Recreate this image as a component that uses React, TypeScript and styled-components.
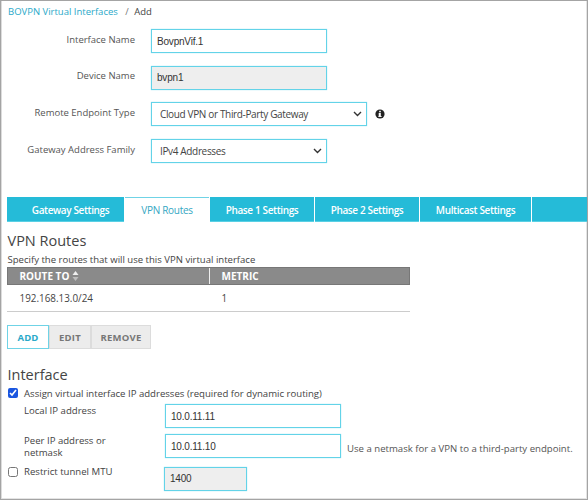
import React from "react";
import styled, { createGlobalStyle } from "styled-components";

const Global = createGlobalStyle`
  html, body { margin: 0; padding: 0; background: #fff; }
  body { font-family: "Open Sans", "Liberation Sans", sans-serif; font-size: 9.6px; color: #444; }
`;

const Frame = styled.div`
  width: 588px; height: 500px; box-sizing: border-box; overflow: hidden;
  border: 1px solid #a4a4a4;
  box-shadow: inset 1px 0 0 #dcdcdc, inset -1px 0 0 #e4e4e4, inset 0 -1px 0 #e4e4e4;
  display: flex; flex-direction: column;
`;
const Crumbs = styled.div`
  padding: 4px 0 0 7px; height: 23px; box-sizing: border-box; line-height: 14px; font-size: 9.5px;
  a { color: #2aa9c9; text-decoration: none; }
  span { margin: 0 5.5px 0 7.5px; color: #777; }
`;
const FormRows = styled.div`
  display: flex; flex-direction: column; gap: 12.7px; padding-top: 5px;
`;
const Row = styled.div`
  display: grid; grid-template-columns: 134px auto auto; justify-content: start; column-gap: 16px; align-items: start;
`;
const RowLabel = styled.label`
  text-align: right; line-height: 14px; padding-top: 3.5px; font-size: 9.5px; color: #555; white-space: nowrap;
`;
const Field = styled.div<{ $w: number; $bg?: string; $pl?: number }>`
  width: ${p => p.$w}px; height: 24px; box-sizing: border-box;
  border: 1px solid #63d3e8;
  box-shadow: 0 0 1px rgba(99, 211, 232, 0.7);
  background: ${p => p.$bg || "#fff"};
  padding-left: ${p => p.$pl ?? 5}px;
  display: flex; align-items: center; justify-content: space-between;
  font-family: "Liberation Sans", Arial, sans-serif; font-size: 10px; letter-spacing: -0.2px; color: #333;
  svg { margin-right: 4px; }
`;
const SelectField = styled(Field)`
  font-family: "Open Sans", sans-serif; font-size: 10px; letter-spacing: -0.35px; color: #444;
`;
const InfoWrap = styled.div`
  display: flex; align-items: center; height: 23px; margin-left: -8.5px;
`;
const Tabs = styled.div`
  display: flex; margin: 34px 0 0 6px; height: 25px; gap: 1px; flex-shrink: 0;
`;
const Tab = styled.div<{ $active?: boolean; $w?: number; $grow?: boolean; $pl?: number }>`
  ${p => p.$w ? `width: ${p.$w}px;` : ""}
  ${p => p.$grow ? "flex: 1;" : ""}
  box-sizing: border-box;
  padding-left: ${p => p.$pl ?? 0}px;
  background: ${p => p.$active ? "#fff" : "#25bbd8"};
  border-top: 1px solid ${p => p.$active ? "#6fd3e6" : "#25bbd8"};
  color: ${p => p.$active ? "#35a7c3" : "#fff"};
  font-size: 10px; letter-spacing: ${p => p.$active ? -0.3 : -0.37}px; font-weight: ${p => p.$active ? 400 : 600};
  display: flex; align-items: center; justify-content: center;
  box-shadow: ${p => p.$active ? "none" : "inset 0 -1px 0 #5ad0e4"};
`;
const Heading = styled.h2`
  margin: 0; font-weight: 400; font-size: 14.5px; line-height: 20px; color: #444; padding-left: 6.5px;
`;
const RoutesHeading = styled(Heading)`
  margin-top: 9px;
`;
const Hint = styled.div`
  padding-left: 6.5px; line-height: 14px; font-size: 9.55px; color: #444; margin-top: 2px;
`;
const Table = styled.div`
  width: 403px; margin-left: 6px;
`;
const THead = styled.div`
  display: grid; grid-template-columns: 201px 1fr; height: 18px; background: #8a8a8a;
  box-sizing: border-box; border: 1px solid #777;
`;
const Th = styled.div`
  color: #fff; font-weight: 700; font-size: 10px; padding-left: 11.5px; display: flex; align-items: center; gap: 3px;
  & + & { border-left: 1px solid #eee; }
`;
const TRow = styled.div`
  display: grid; grid-template-columns: 202px 1fr; height: 27px; box-sizing: border-box; align-items: center; border-bottom: 1px solid #ccc;
  font-size: 9.9px; color: #444;
  div { padding-left: 12.5px; }
`;
const Buttons = styled.div`
  display: flex; margin: 13px 0 0 6px; height: 24px;
`;
const Btn = styled.button<{ $primary?: boolean; $w: number }>`
  width: ${p => p.$w}px; box-sizing: border-box; padding: 0; margin: 0;
  border: 1px solid ${p => p.$primary ? "#6fd3e6" : "#dcdcdc"};
  background: ${p => p.$primary ? "#fff" : "#ececec"};
  color: ${p => p.$primary ? "#2aa9c9" : "#777"};
  font: 700 9.5px "Open Sans", sans-serif; letter-spacing: 0.2px;
`;
const InterfaceHeading = styled(Heading)`
  margin-top: 16px;
`;
const CheckRow = styled.div`
  display: flex; align-items: center; gap: 6px; padding-left: 7px; height: 14px; font-size: 9.6px; color: #444; margin-top: 1px;
`;
const Check = styled.input`
  width: 10px; height: 10px; margin: 0; flex-shrink: 0; accent-color: #1a56e0;
`;
const SubRows = styled.div`
  display: flex; flex-direction: column; gap: 6px; margin-top: 4px;
`;
const SubRow = styled.div`
  display: grid; grid-template-columns: 141px 176px auto; padding-left: 23px;
`;
const SubLabel = styled.div`
  line-height: 12.7px; font-size: 9.6px; color: #444; width: 90px; padding-top: 0.5px;
`;
const Note = styled.div`
  font-size: 9.6px; color: #555; padding: 8px 0 0 6px; white-space: nowrap; line-height: 14px;
`;
const MtuRow = styled.div`
  display: grid; grid-template-columns: 16px 140px auto; align-items: start; padding-left: 7px; margin-top: 7px;
`;
const MtuCheck = styled.div`
  line-height: 12px; height: 12px; margin-top: -1px; display: flex; align-items: center;
`;
const MtuLabel = styled.div`
  font-size: 9.6px; color: #444; line-height: 12px; margin-top: -1px;
`;

const Chevron = () => (
  <svg width="9" height="6" viewBox="0 0 9 6"><path d="M1 1l3.5 3.5L8 1" fill="none" stroke="#333" strokeWidth="1.4" /></svg>
);
const Info = () => (
  <svg width="10" height="10" viewBox="0 0 10 10">
    <circle cx="5" cy="5" r="4.6" fill="#222" />
    <rect x="4.2" y="1.8" width="1.6" height="1.5" fill="#fff" />
    <rect x="3.7" y="4" width="2.1" height="3.6" fill="#fff" />
    <rect x="3.4" y="7" width="3.2" height="0.9" fill="#fff" />
  </svg>
);
const Sort = () => (
  <svg width="7" height="10" viewBox="0 0 7 10"><path d="M3.5 0l3 4H.5z" fill="#f0f0f0" /><path d="M3.5 10l-3-4h6z" fill="#bdbdbd" /></svg>
);

export default function App() {
  return (
    <Frame>
      <Global />
      <Crumbs><a href="#x">BOVPN Virtual Interfaces</a><span>/</span>Add</Crumbs>
      <FormRows>
        <Row><RowLabel>Interface Name</RowLabel><Field $w={176}>BovpnVif.1</Field></Row>
        <Row><RowLabel>Device Name</RowLabel><Field $w={176} $bg="#eee">bvpn1</Field></Row>
        <Row>
          <RowLabel>Remote Endpoint Type</RowLabel>
          <SelectField $w={216} $pl={8}>Cloud VPN or Third-Party Gateway<Chevron /></SelectField>
          <InfoWrap><Info /></InfoWrap>
        </Row>
        <Row><RowLabel>Gateway Address Family</RowLabel><SelectField $w={176} $pl={8}>IPv4 Addresses<Chevron /></SelectField></Row>
      </FormRows>
      <Tabs>
        <Tab $w={117} $pl={10}>Gateway Settings</Tab>
        <Tab $active $w={84}>VPN Routes</Tab>
        <Tab $w={104}>Phase 1 Settings</Tab>
        <Tab $w={104}>Phase 2 Settings</Tab>
        <Tab $w={111}>Multicast Settings</Tab>
        <Tab $grow />
      </Tabs>
      <RoutesHeading>VPN Routes</RoutesHeading>
      <Hint>Specify the routes that will use this VPN virtual interface</Hint>
      <Table>
        <THead><Th>ROUTE TO <Sort /></Th><Th>METRIC</Th></THead>
        <TRow><div>192.168.13.0/24</div><div>1</div></TRow>
      </Table>
      <Buttons>
        <Btn $primary $w={42}>ADD</Btn>
        <Btn $w={42}>EDIT</Btn>
        <Btn $w={60}>REMOVE</Btn>
      </Buttons>
      <InterfaceHeading>Interface</InterfaceHeading>
      <CheckRow><Check type="checkbox" defaultChecked />Assign virtual interface IP addresses (required for dynamic routing)</CheckRow>
      <SubRows>
        <SubRow><SubLabel>Local IP address</SubLabel><Field $w={176}>10.0.11.11</Field></SubRow>
        <SubRow><SubLabel>Peer IP address or netmask</SubLabel><Field $w={176}>10.0.11.10</Field><Note>Use a netmask for a VPN to a third-party endpoint.</Note></SubRow>
      </SubRows>
      <MtuRow>
        <MtuCheck><Check type="checkbox" /></MtuCheck>
        <MtuLabel>Restrict tunnel MTU</MtuLabel>
        <Field $w={83} $bg="#eee">1400</Field>
      </MtuRow>
    </Frame>
  );
}
